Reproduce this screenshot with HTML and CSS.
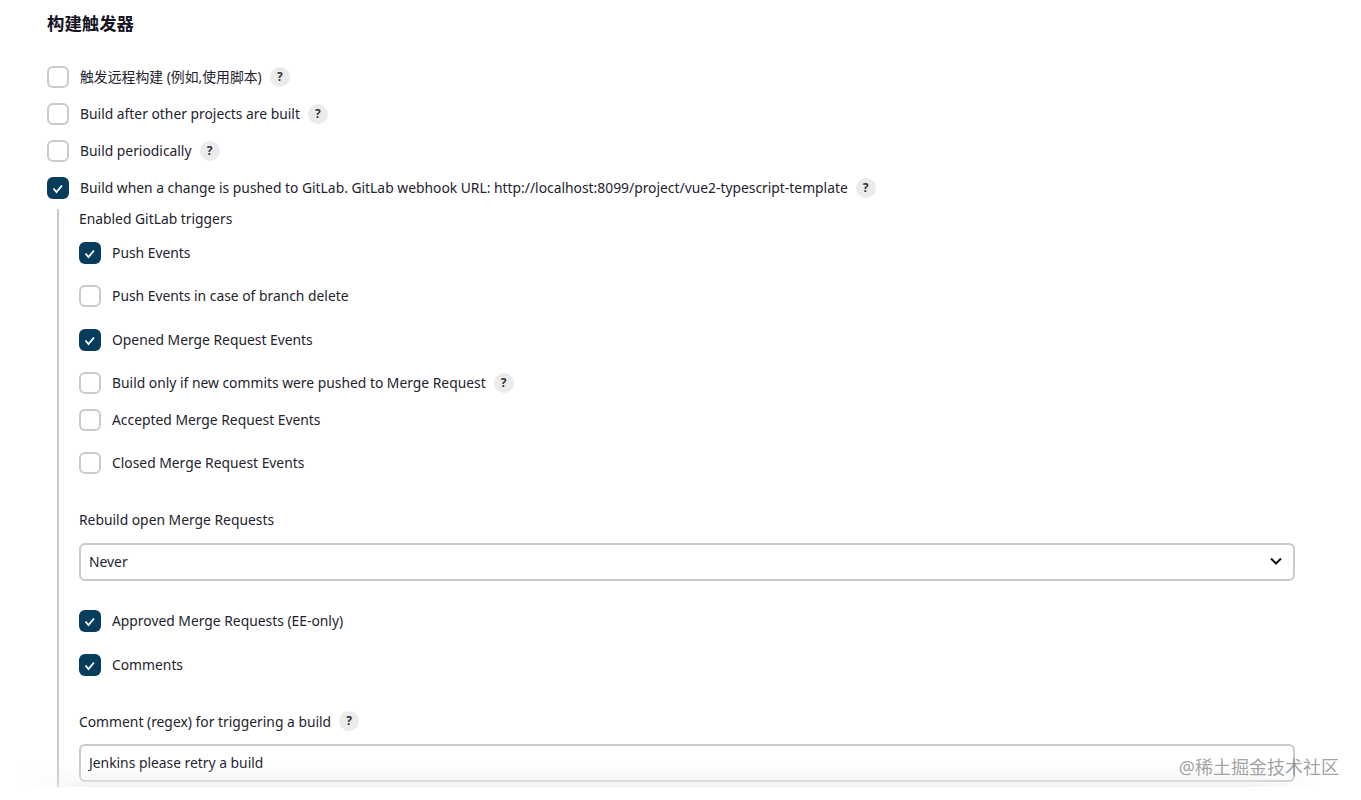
FILE: index.html
```html
<!DOCTYPE html>
<html lang="zh">
<head>
    <meta charset="UTF-8">
    <meta name="viewport" content="width=device-width, initial-scale=1.0">
    <title>构建触发器</title>
    <link rel="stylesheet" href="styles.css">
</head>
<body>
    <div class="page">
        <h2 class="section-title">构建触发器</h2>

        <div class="option">
            <span class="checkbox"></span>
            <span class="option-label">触发远程构建 (例如,使用脚本)</span>
            <span class="help">?</span>
        </div>
        <div class="option">
            <span class="checkbox"></span>
            <span class="option-label">Build after other projects are built</span>
            <span class="help">?</span>
        </div>
        <div class="option">
            <span class="checkbox"></span>
            <span class="option-label">Build periodically</span>
            <span class="help">?</span>
        </div>
        <div class="option option-last">
            <span class="checkbox checked">
                <svg viewBox="0 0 22 22"><path d="M6.5 11.5l3 3.5 5.5-6.5"/></svg>
            </span>
            <span class="option-label">Build when a change is pushed to GitLab. GitLab webhook URL: http://localhost:8099/project/vue2-typescript-template</span>
            <span class="help">?</span>
        </div>

        <div class="nested">
            <div class="field-label first-label">Enabled GitLab triggers</div>

            <div class="option wide">
                <span class="checkbox checked">
                    <svg viewBox="0 0 22 22"><path d="M6.5 11.5l3 3.5 5.5-6.5"/></svg>
                </span>
                <span class="option-label">Push Events</span>
            </div>
            <div class="option wide">
                <span class="checkbox"></span>
                <span class="option-label">Push Events in case of branch delete</span>
            </div>
            <div class="option wide">
                <span class="checkbox checked">
                    <svg viewBox="0 0 22 22"><path d="M6.5 11.5l3 3.5 5.5-6.5"/></svg>
                </span>
                <span class="option-label">Opened Merge Request Events</span>
            </div>
            <div class="option">
                <span class="checkbox"></span>
                <span class="option-label">Build only if new commits were pushed to Merge Request</span>
                <span class="help">?</span>
            </div>
            <div class="option wide">
                <span class="checkbox"></span>
                <span class="option-label">Accepted Merge Request Events</span>
            </div>
            <div class="option">
                <span class="checkbox"></span>
                <span class="option-label">Closed Merge Request Events</span>
            </div>

            <div class="field-label rebuild-label">Rebuild open Merge Requests</div>
            <div class="select-box">
                <span>Never</span>
                <svg class="chevron" viewBox="0 0 14 10"><path d="M2 2.5l5 5 5-5"/></svg>
            </div>

            <div class="option wider">
                <span class="checkbox checked">
                    <svg viewBox="0 0 22 22"><path d="M6.5 11.5l3 3.5 5.5-6.5"/></svg>
                </span>
                <span class="option-label">Approved Merge Requests (EE-only)</span>
            </div>
            <div class="option">
                <span class="checkbox checked">
                    <svg viewBox="0 0 22 22"><path d="M6.5 11.5l3 3.5 5.5-6.5"/></svg>
                </span>
                <span class="option-label">Comments</span>
            </div>

            <div class="field-label comment-label">
                Comment (regex) for triggering a build
                <span class="help">?</span>
            </div>
            <div class="text-box">Jenkins please retry a build</div>
        </div>

        <div class="bottom-fade"></div>
    </div>
    <div class="watermark">@稀土掘金技术社区</div>
</body>
</html>
```

FILE: styles.css
```css
* {
    margin: 0;
    padding: 0;
    box-sizing: border-box;
    font-family: 'Noto Sans', 'Noto Sans CJK SC', sans-serif;
}

body {
    background: #fff;
    color: #23232e;
    font-size: 13.85px;
}

.page {
    position: relative;
    height: 787px;
    padding: 11px 0 0 47px;
    overflow: hidden;
}

.section-title {
    color: #14141f;
    font-size: 17.4px;
    font-weight: 700;
    line-height: 24px;
    margin-bottom: 31px;
}

.option {
    display: flex;
    align-items: center;
    height: 22px;
    margin-bottom: 15px;
}

.option.wide {
    margin-bottom: 21.3px;
}

.option.wider {
    margin-bottom: 22px;
}

.option-last {
    margin-bottom: 10px;
}

.checkbox {
    flex: none;
    width: 22px;
    height: 22px;
    border: 2px solid #c8cacc;
    border-radius: 6px;
    background: #fff;
}

.checkbox.checked {
    border: none;
    background: #063c5c;
}

.checkbox svg {
    display: block;
    width: 22px;
    height: 22px;
    fill: none;
    stroke: #fff;
    stroke-width: 1.8;
}

.option-label {
    margin-left: 11px;
    line-height: 22px;
}

.help {
    flex: none;
    display: inline-block;
    width: 20px;
    height: 20px;
    margin-left: 8px;
    border-radius: 50%;
    background: #ebebeb;
    color: #33333d;
    font-size: 12px;
    font-weight: 700;
    line-height: 20px;
    text-align: center;
}

.nested {
    margin-left: 10px;
    padding-left: 20px;
    border-left: 2px solid #c8cacc;
    width: 1238px;
    height: 600px;
}

.field-label {
    display: flex;
    align-items: center;
    height: 20px;
}

.first-label {
    height: 19px;
    margin-bottom: 14px;
}

.rebuild-label {
    padding-bottom: 2px;
    margin-top: 36px;
    margin-bottom: 13px;
}

.comment-label {
    padding-bottom: 2px;
    margin-top: 36px;
    margin-bottom: 12px;
}

.select-box,
.text-box {
    display: flex;
    align-items: center;
    height: 38px;
    border: 2px solid #c8cacc;
    border-radius: 6px;
    padding: 0 8px 2px;
    background: #fff;
}

.select-box {
    justify-content: space-between;
    margin-bottom: 29px;
}

.chevron {
    width: 14px;
    height: 10px;
    margin-right: 2px;
    fill: none;
    stroke: #14141f;
    stroke-width: 2;
}

.bottom-fade {
    position: absolute;
    left: 20px;
    right: 40px;
    bottom: 0;
    height: 22px;
    background: linear-gradient(rgba(235, 236, 237, 0), rgba(235, 236, 237, 0.7));
    -webkit-mask-image: linear-gradient(to right, transparent, #000 6%, #000 94%, transparent);
    mask-image: linear-gradient(to right, transparent, #000 6%, #000 94%, transparent);
}

.watermark {
    position: absolute;
    right: 22px;
    top: 755px;
    color: rgba(120, 122, 125, 0.7);
    font-size: 18px;
    line-height: 24px;
}
```
